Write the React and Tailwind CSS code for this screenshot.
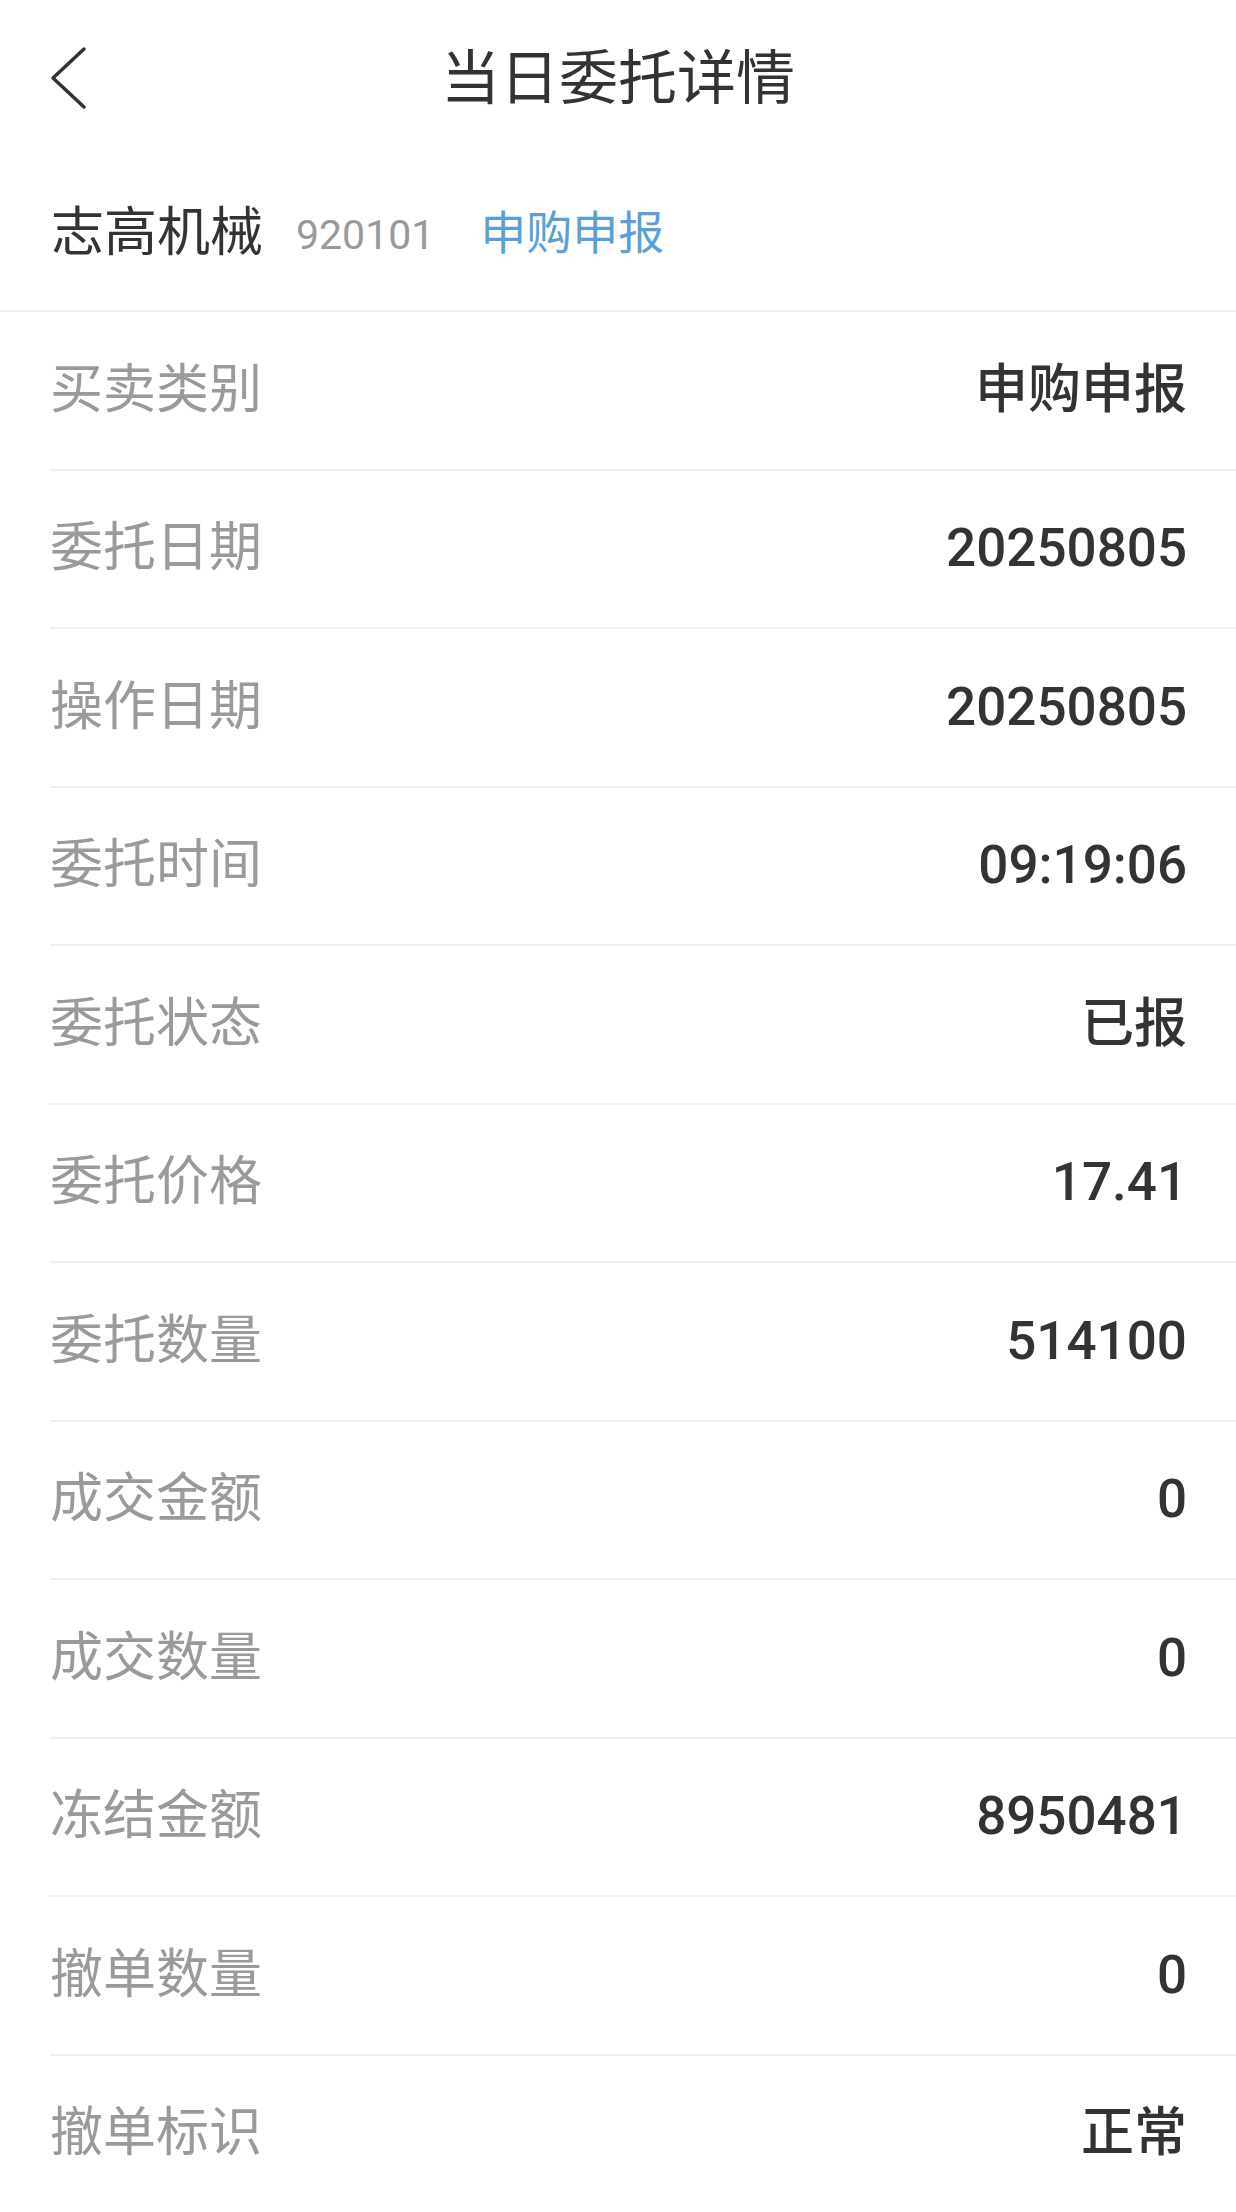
import React from "react";

const rows = [
  { label: "买卖类别", value: "申购申报" },
  { label: "委托日期", value: "20250805" },
  { label: "操作日期", value: "20250805" },
  { label: "委托时间", value: "09:19:06" },
  { label: "委托状态", value: "已报" },
  { label: "委托价格", value: "17.41" },
  { label: "委托数量", value: "514100" },
  { label: "成交金额", value: "0" },
  { label: "成交数量", value: "0" },
  { label: "冻结金额", value: "8950481" },
  { label: "撤单数量", value: "0" },
  { label: "撤单标识", value: "正常" },
];

function BackIcon() {
  return (
    <svg width="40" height="64" viewBox="0 0 40 64" fill="none">
      <polyline
        points="36,3 5,32 36,61"
        stroke="#333333"
        strokeWidth="3.5"
        strokeLinecap="round"
        strokeLinejoin="round"
      />
    </svg>
  );
}

function App() {
  return (
    <div
      className="w-full min-h-[2212px] bg-white text-[#333333]"
      style={{ fontFamily: 'Roboto, "Noto Sans CJK SC", sans-serif' }}
    >
      {/* 标题栏 */}
      <div className="h-[156px] grid grid-cols-[1fr_auto_1fr] items-center">
        <div className="pl-[48px] flex items-center">
          <BackIcon />
        </div>
        <h1 className="text-[59px] leading-none font-normal">当日委托详情</h1>
        <div />
      </div>

      {/* 股票信息 */}
      <div className="h-[156px] flex items-center pl-[51px] border-b-2 border-[#eeeeee]">
        <span className="text-[53px] leading-none">志高机械</span>
        <span className="ml-[33px] text-[41px] leading-none text-[#999999] mt-[4px]">920101</span>
        <span className="ml-[46px] text-[46px] leading-none text-[#5a9fd8]">申购申报</span>
      </div>

      {/* 详情列表 */}
      <div className="h-[1900px] flex flex-col">
        {rows.map((row, i) => (
          <div
            key={row.label}
            className={
              "flex-1 flex items-center justify-between ml-[50px] pr-[49px] " +
              (i < rows.length - 1 ? "border-b-2 border-[#f0f0f0]" : "")
            }
          >
            <span className="text-[53px] leading-none text-[#9a9a9a]">{row.label}</span>
            <span className="text-[53px] leading-none font-medium text-[#333333]">{row.value}</span>
          </div>
        ))}
      </div>
    </div>
  );
}

export default App;
